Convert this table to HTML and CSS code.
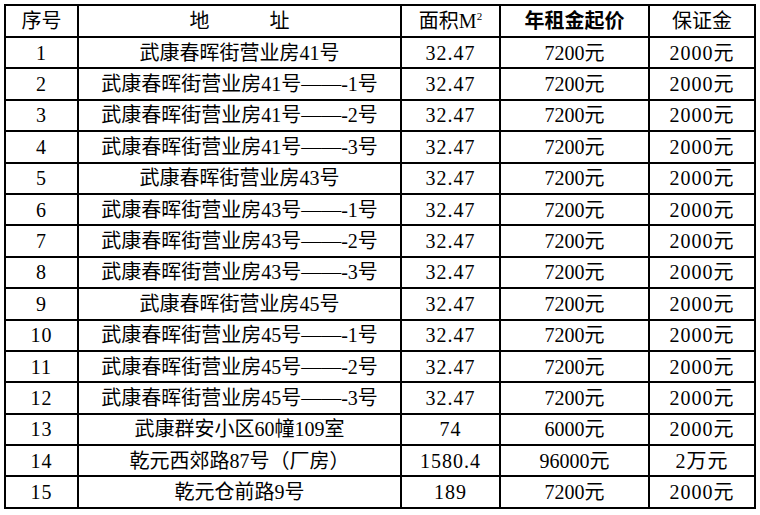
FILE: index.html
```html
<!DOCTYPE html>
<html lang="zh">
<head>
<meta charset="utf-8">
<title>租赁清单</title>
<link rel="stylesheet" href="styles.css">
</head>
<body>
<table class="grid">
  <colgroup>
    <col class="c-no"><col class="c-addr"><col class="c-area"><col class="c-rent"><col class="c-dep">
  </colgroup>
  <thead>
    <tr>
      <th class="sim">序号</th>
      <th class="sim">地　　　址</th>
      <th class="sim">面积M<sup>2</sup></th>
      <th class="bold">年租金起价</th>
      <th class="sim">保证金</th>
    </tr>
  </thead>
  <tbody>
    <tr><td class="num">1</td><td>武康春晖街营业房41号</td><td class="num">32.47</td><td>7200元</td><td class="num">2000元</td></tr>
    <tr><td class="num">2</td><td>武康春晖街营业房41号——-1号</td><td class="num">32.47</td><td>7200元</td><td class="num">2000元</td></tr>
    <tr><td class="num">3</td><td>武康春晖街营业房41号——-2号</td><td class="num">32.47</td><td>7200元</td><td class="num">2000元</td></tr>
    <tr><td class="num">4</td><td>武康春晖街营业房41号——-3号</td><td class="num">32.47</td><td>7200元</td><td class="num">2000元</td></tr>
    <tr><td class="num">5</td><td>武康春晖街营业房43号</td><td class="num">32.47</td><td>7200元</td><td class="num">2000元</td></tr>
    <tr><td class="num">6</td><td>武康春晖街营业房43号——-1号</td><td class="num">32.47</td><td>7200元</td><td class="num">2000元</td></tr>
    <tr><td class="num">7</td><td>武康春晖街营业房43号——-2号</td><td class="num">32.47</td><td>7200元</td><td class="num">2000元</td></tr>
    <tr><td class="num">8</td><td>武康春晖街营业房43号——-3号</td><td class="num">32.47</td><td>7200元</td><td class="num">2000元</td></tr>
    <tr><td class="num">9</td><td>武康春晖街营业房45号</td><td class="num">32.47</td><td>7200元</td><td class="num">2000元</td></tr>
    <tr><td class="num">10</td><td>武康春晖街营业房45号——-1号</td><td class="num">32.47</td><td>7200元</td><td class="num">2000元</td></tr>
    <tr><td class="num">11</td><td>武康春晖街营业房45号——-2号</td><td class="num">32.47</td><td>7200元</td><td class="num">2000元</td></tr>
    <tr><td class="num">12</td><td>武康春晖街营业房45号——-3号</td><td class="num">32.47</td><td>7200元</td><td class="num">2000元</td></tr>
    <tr><td class="num">13</td><td>武康群安小区60幢109室</td><td class="num">74</td><td>6000元</td><td class="num">2000元</td></tr>
    <tr><td class="num">14</td><td>乾元西郊路87号（厂房）</td><td class="num">1580.4</td><td>96000元</td><td class="num">2万元</td></tr>
    <tr><td class="num">15</td><td>乾元仓前路9号</td><td class="num">189</td><td>7200元</td><td class="num">2000元</td></tr>
  </tbody>
</table>
</body>
</html>
```
FILE: styles.css
```css
html, body {
  background: #ffffff;
}
body {
  margin: 4px 0 0 4px;
  font-family: "Liberation Serif", "Noto Sans CJK SC", serif;
  color: #000;
}
.grid {
  border-collapse: collapse;
  width: 750px;
  table-layout: fixed;
  border: 2px solid #000;
}
.c-no { width: 73px; }
.c-addr { width: 323px; }
.c-area { width: 99px; }
.c-rent { width: 149px; }
.c-dep { width: 106px; }
.grid th, .grid td {
  border: 2px solid #000;
  padding: 0;
  height: 29.4px;
  text-align: center;
  vertical-align: middle;
  font-size: 20px;
  font-weight: 400;
  line-height: 22px;
  white-space: nowrap;
}
.grid th {
  height: 30px;
}
.grid th.bold {
  font-weight: 700;
}
.grid sup {
  font-size: 11px;
  line-height: 0;
  vertical-align: 8px;
}
.num {
  letter-spacing: 1px;
}
```
